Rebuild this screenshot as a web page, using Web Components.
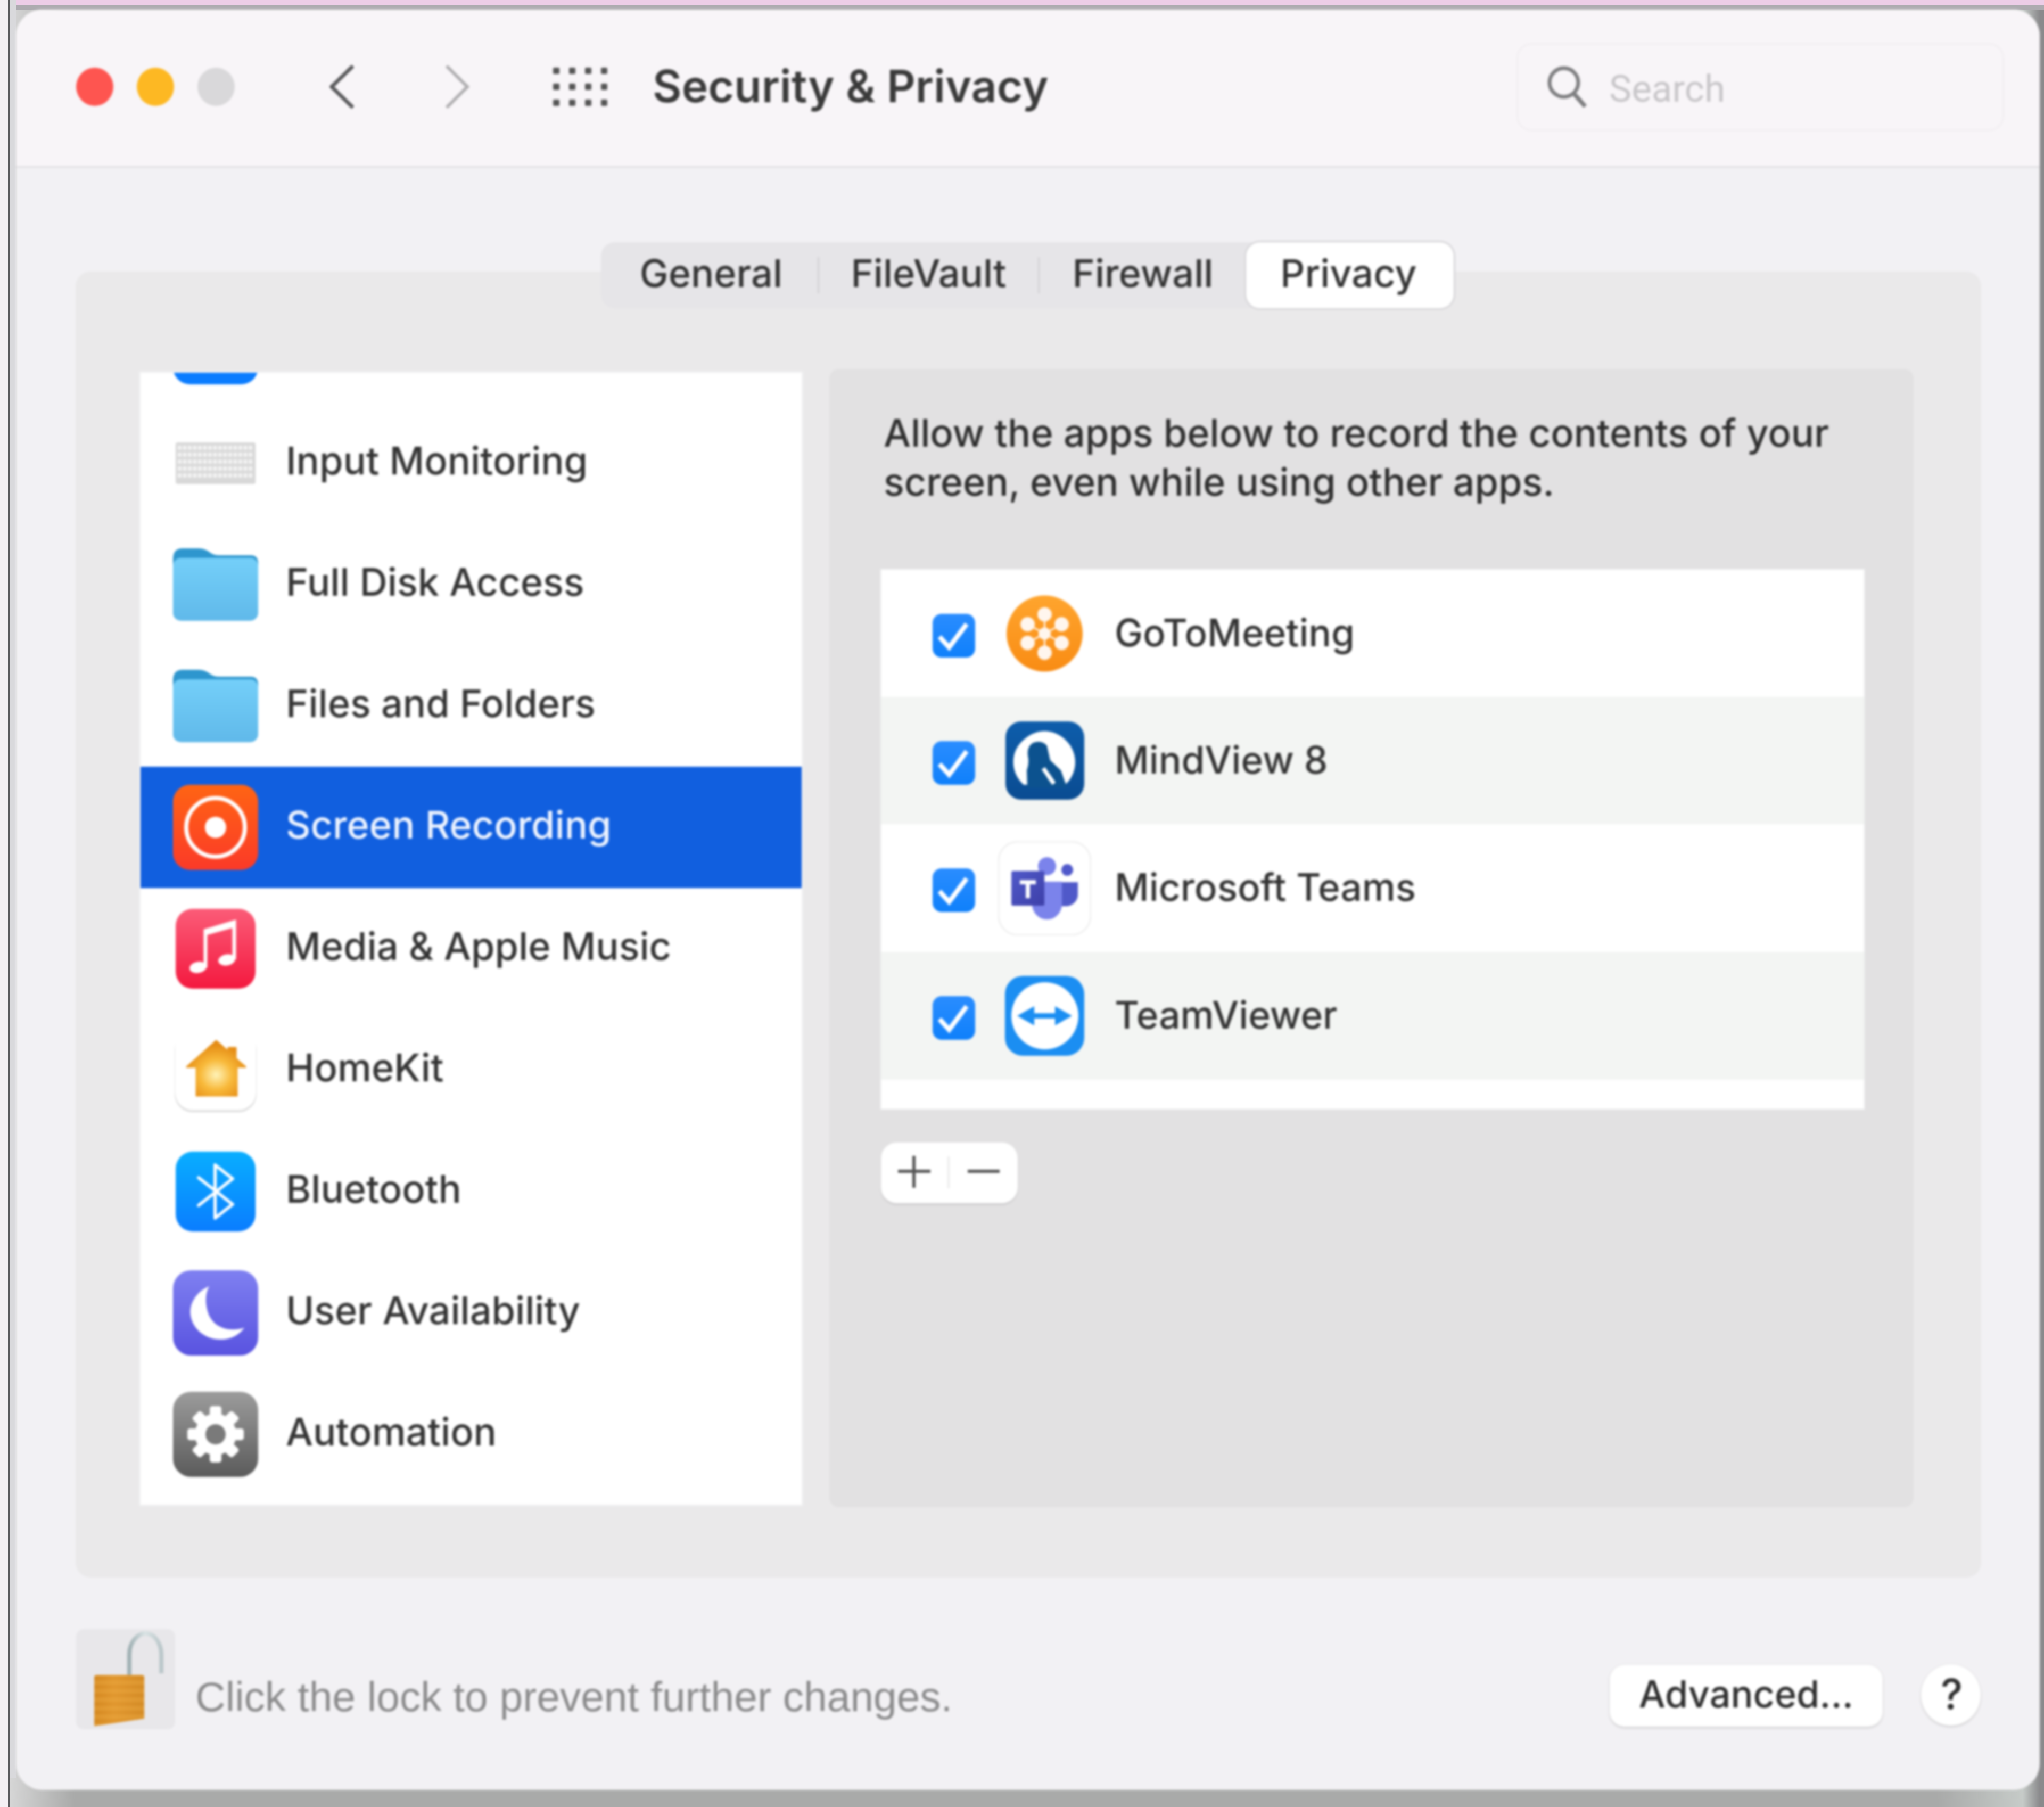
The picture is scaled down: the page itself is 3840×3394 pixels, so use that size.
<!doctype html>
<html>
<head>
<meta charset="utf-8">
<title>Security &amp; Privacy</title>
<style>
  html, body { margin: 0; padding: 0; }
  body { width: 3840px; height: 3394px; overflow: hidden; font-family: Inter, "Liberation Sans", sans-serif; color: #333; }
</style>
</head>
<body>
<desktop-frame>
  <mac-window>
    <mac-toolbar slot="toolbar">Security &amp; Privacy</mac-toolbar>
    <prefs-panel>
      <tab-strip slot="tabs">
        <tab-item style="width:407px;padding-left:8px">General</tab-item>
        <tab-item sep style="width:414px;padding-left:4px">FileVault</tab-item>
        <tab-item sep style="width:391px;padding-left:4px">Firewall</tab-item>
        <tab-item active style="width:390px;padding-right:4px">Privacy</tab-item>
      </tab-strip>
      <side-list slot="side">
        <side-row icon="blank"></side-row>
        <side-row icon="keyboard">Input Monitoring</side-row>
        <side-row icon="folder">Full Disk Access</side-row>
        <side-row icon="folder">Files and Folders</side-row>
        <side-row icon="record" selected>Screen Recording</side-row>
        <side-row icon="music">Media &amp; Apple Music</side-row>
        <side-row icon="home">HomeKit</side-row>
        <side-row icon="bluetooth">Bluetooth</side-row>
        <side-row icon="moon">User Availability</side-row>
        <side-row icon="gear">Automation</side-row>
      </side-list>
      <detail-pane slot="detail">
        <span slot="text">Allow the apps below to record the contents of your<br>screen, even while using other apps.</span>
        <app-row icon="goto" style="height:239px">GoToMeeting</app-row>
        <app-row icon="mindview" alt style="height:239px">MindView 8</app-row>
        <app-row icon="teams" style="height:240px">Microsoft Teams</app-row>
        <app-row icon="teamviewer" alt style="height:240px">TeamViewer</app-row>
      </detail-pane>
    </prefs-panel>
    <lock-footer slot="footer"></lock-footer>
  </mac-window>
</desktop-frame>

<script>
const icons = {
  blank: `<svg width="160" height="160" viewBox="0 0 160 160"><rect width="160" height="160" rx="32" fill="#0a7cff"/></svg>`,
  keyboard: `<svg width="160" height="160" viewBox="0 0 160 160"><rect x="5" y="41" width="150" height="78" rx="4" fill="#d8d8d8"/>
    <g stroke="#f3f3f3" stroke-width="8" stroke-dasharray="7 2.500"><path d="M9 51H151M9 64H151M9 77H151M9 90H151M9 103H151"/></g></svg>`,
  folder: `<svg width="160" height="160" viewBox="0 0 160 160"><defs><linearGradient id="f" x1="0" y1="0" x2="0" y2="1"><stop offset="0" stop-color="#74cff9"/><stop offset="1" stop-color="#60b9ea"/></linearGradient></defs>
    <path d="M0 32Q0 12 18 12H48Q60 12 70 20Q76 25 88 25H146Q160 25 160 40V70H0Z" fill="#2e96ce"/>
    <rect x="0" y="30" width="160" height="118" rx="15" fill="url(#f)"/></svg>`,
  record: `<svg width="160" height="160" viewBox="0 0 160 160"><defs><linearGradient id="r" x1="0" y1="0" x2="0" y2="1"><stop offset="0" stop-color="#ff6414"/><stop offset="1" stop-color="#fb3a28"/></linearGradient></defs>
    <rect width="160" height="160" rx="32" fill="url(#r)"/><circle cx="80" cy="80" r="55" fill="none" stroke="#fff" stroke-width="8"/><circle cx="80" cy="80" r="20" fill="#fff"/></svg>`,
  music: `<svg width="160" height="160" viewBox="0 0 160 160"><defs><linearGradient id="m" x1="0" y1="0" x2="0" y2="1"><stop offset="0" stop-color="#fb5c78"/><stop offset="1" stop-color="#f4193f"/></linearGradient></defs>
    <rect x="5" y="5" width="150" height="150" rx="32" fill="url(#m)"/>
    <path d="M61 116V46L115 30V100" fill="none" stroke="#fff" stroke-width="7"/><path d="M61 44L115 29V40L61 55Z" fill="#fff"/>
    <ellipse cx="47" cy="115" rx="16" ry="10.500" fill="#fff" transform="rotate(-10 47 115)"/><ellipse cx="101" cy="101" rx="16" ry="10.500" fill="#fff" transform="rotate(-10 101 101)"/></svg>`,
  home: `<svg width="160" height="160" viewBox="0 0 160 160"><defs><radialGradient id="h" cx="0.500" cy="0.620" r="0.550"><stop offset="0" stop-color="#fff3b8"/><stop offset="0.500" stop-color="#f8b93a"/><stop offset="1" stop-color="#e58c14"/></radialGradient></defs>
    <rect x="3" y="7" width="154" height="152" rx="34" fill="#dedede"/>
    <rect x="4" y="3" width="152" height="152" rx="33" fill="#fff"/>
    <path d="M26 74L81 25L104 45V38H118V58L136 74H120V128H44V74Z" fill="url(#h)" stroke="url(#h)" stroke-width="3" stroke-linejoin="round"/></svg>`,
  bluetooth: `<svg width="160" height="160" viewBox="0 0 160 160"><defs><linearGradient id="b" x1="0" y1="0" x2="0" y2="1"><stop offset="0" stop-color="#09aeff"/><stop offset="1" stop-color="#0a7dff"/></linearGradient></defs>
    <rect x="5" y="5" width="150" height="150" rx="32" fill="url(#b)"/>
    <path d="M48 54L112 104L79 130V30L112 56L48 106" fill="none" stroke="#fff" stroke-width="6" stroke-linejoin="round" stroke-linecap="round"/></svg>`,
  moon: `<svg width="160" height="160" viewBox="0 0 160 160"><defs><linearGradient id="n" x1="0" y1="0" x2="0" y2="1"><stop offset="0" stop-color="#7f80f1"/><stop offset="1" stop-color="#5953e0"/></linearGradient></defs>
    <rect width="160" height="160" rx="34" fill="url(#n)"/>
    <path d="M68 30C44 40 30 62 33 84C37 112 62 130 90 130C108 130 124 122 134 108C100 118 74 104 66 80C60 62 60 44 68 30Z" fill="#fff"/></svg>`,
  gear: `<svg width="160" height="160" viewBox="0 0 160 160"><defs><linearGradient id="g" x1="0" y1="0" x2="0" y2="1"><stop offset="0" stop-color="#9c9c9c"/><stop offset="1" stop-color="#5b5b5b"/></linearGradient></defs>
    <rect width="160" height="160" rx="34" fill="url(#g)"/>
    <g fill="#fff"><circle cx="80" cy="80" r="39"/>
      <rect x="69" y="27" width="22" height="106" rx="5"/>
      <rect x="69" y="27" width="22" height="106" rx="5" transform="rotate(45 80 80)"/>
      <rect x="69" y="27" width="22" height="106" rx="5" transform="rotate(90 80 80)"/>
      <rect x="69" y="27" width="22" height="106" rx="5" transform="rotate(135 80 80)"/></g>
    <circle cx="80" cy="80" r="19" fill="#7a7a7a"/></svg>`,
  goto: `<svg width="143" height="144" viewBox="0 0 143 144"><defs><linearGradient id="o" x1="0" y1="0" x2="0" y2="1"><stop offset="0" stop-color="#ffa52e"/><stop offset="1" stop-color="#f98c14"/></linearGradient></defs>
    <circle cx="71.500" cy="72" r="71.500" fill="url(#o)"/>
    <g fill="#fff6ee" stroke="#fff6ee" stroke-width="3"><path d="M71.500 36V108M39.500 54.500L103.500 89.500M39.500 89.500L103.500 54.500"/>
      <circle cx="71.500" cy="36" r="12"/><circle cx="71.500" cy="108" r="12"/><circle cx="39.500" cy="54.500" r="12"/><circle cx="103.500" cy="54.500" r="12"/><circle cx="39.500" cy="89.500" r="12"/><circle cx="103.500" cy="89.500" r="12"/><circle cx="71.500" cy="72" r="10"/></g></svg>`,
  mindview: `<svg width="148" height="147" viewBox="0 0 148 147"><defs><linearGradient id="v" x1="0" y1="0" x2="0" y2="1"><stop offset="0" stop-color="#0e5dab"/><stop offset="1" stop-color="#0a4c92"/></linearGradient></defs>
    <rect width="148" height="147" rx="30" fill="url(#v)"/>
    <path d="M34 119C8 95 8 55 36 33C60 12 92 14 114 36C138 60 136 98 112 119Z" fill="#fff"/>
    <path d="M41 125L40 92Q44 80 43 70Q38 48 52 40Q68 34 78 46L84 73L104 92L116 125Z" fill="#0c528f"/>
    <path d="M71 88L91 117" stroke="#fff" stroke-width="8" fill="none"/></svg>`,
  teams: `<svg width="175" height="177" viewBox="0 0 175 177"><defs><linearGradient id="w" x1="0" y1="0" x2="1" y2="1"><stop offset="0" stop-color="#5059c9"/><stop offset="1" stop-color="#3d3fa8"/></linearGradient></defs>
    <rect x="1" y="1" width="173" height="175" rx="36" fill="#fff" stroke="#efefef" stroke-width="3"/>
    <circle cx="130" cy="54" r="11" fill="#4f58ca"/>
    <path d="M108 77H150V100C150 112 140 122 128 122H108Z" fill="#5059c9"/>
    <path d="M64 76H120V118C120 134 108 147 92 147C76 147 64 134 64 118Z" fill="#7b83eb"/>
    <circle cx="92" cy="47" r="17" fill="#7b83eb"/>
    <rect x="25" y="56" width="62" height="65" rx="3" fill="url(#w)"/>
    <path d="M41 73H71V81H60V107H52V81H41Z" fill="#fff"/></svg>`,
  teamviewer: `<svg width="149" height="150" viewBox="0 0 149 150"><rect width="149" height="150" rx="34" fill="#1b8ef2"/><circle cx="75" cy="75" r="63" fill="#fff"/>
    <path d="M23 75L55 57V70H94V57L126 75L94 93V80H55V93Z" fill="#1b8ef2"/></svg>`
}

class DesktopFrame extends HTMLElement {
  constructor () {
    super()
    this.attachShadow({ mode: 'open' }).innerHTML = `
      <style>
        :host {
          display: block;
          box-sizing: border-box;
          width: 3840px;
          height: 3394px;
          padding: 18px 8px 32px 30px;
          background:
            linear-gradient(90deg, #f4f0f4 0 15px, #5a5a5e 15px 18px, #d9d9dc 18px 30px, transparent 30px) 0 0 / 100% 3340px no-repeat,
            linear-gradient(#eccde7 0 10px, #adabb0 10px 18px, transparent 18px),
            linear-gradient(90deg, #f4f0f4 0 15px, #5a5a5e 15px 18px, #d6d6d6 18px, #a9aaa9 140px, #a9aaa9 3640px, #c6cbc8 3800px, #8a8a8c 3832px);
        }
      </style>
      <slot></slot>`
  }
}

class MacWindow extends HTMLElement {
  constructor () {
    super()
    this.attachShadow({ mode: 'open' }).innerHTML = `
      <style>
        :host {
          display: flex;
          flex-direction: column;
          height: 100%;
          border-radius: 50px;
          overflow: hidden;
          background: #f2f1f4;
          filter: blur(2px);
        }
      </style>
      <slot name="toolbar"></slot>
      <slot></slot>
      <slot name="footer"></slot>`
  }
}

class MacToolbar extends HTMLElement {
  constructor () {
    super()
    let dots = ''
    for (let r = 0; r < 3; r++) {
      for (let c = 0; c < 4; c++) dots += `<rect x="${c * 30}" y="${r * 30}" width="12" height="12" rx="2" fill="#555"/>`
    }
    this.attachShadow({ mode: 'open' }).innerHTML = `
      <style>
        :host {
          display: flex;
          align-items: center;
          box-sizing: border-box;
          height: 297px;
          padding: 0 67px 4px 113px;
          background: #f8f5f8;
          border-bottom: 3px solid #e0dfe2;
        }
        .light { width: 70px; height: 72px; border-radius: 50%; margin-right: 44px; }
        .title { font-size: 84px; font-weight: 600; color: #3a3a3a; margin-left: 85px; padding-bottom: 3px; white-space: nowrap; }
        .search {
          display: flex; align-items: center; box-sizing: border-box;
          width: 916px; height: 165px; margin-left: auto; padding-left: 55px;
          border: 3px solid #f1eef1; border-radius: 28px;
          font: 71px Roboto, sans-serif; color: #c8c6c9;
        }
        .search span { margin-left: 42px; padding-top: 7px; }
        svg { display: block; flex: none; }
      </style>
      <div class="light" style="background:#fe5550"></div>
      <div class="light" style="background:#fdb823"></div>
      <div class="light" style="background:#d9d8da;margin-right:0"></div>
      <svg style="margin-left:178px" width="47" height="84" viewBox="0 0 47 84"><path d="M44 3L4 42L44 81" fill="none" stroke="#58585a" stroke-width="7"/></svg>
      <svg style="margin-left:169px" width="47" height="84" viewBox="0 0 47 84"><path d="M4 3L43 42L4 81" fill="none" stroke="#aeadaf" stroke-width="6"/></svg>
      <svg style="margin-left:157px" width="102" height="72" viewBox="0 0 102 72">${dots}</svg>
      <div class="title"><slot></slot></div>
      <div class="search">
        <svg width="74" height="78" viewBox="0 0 74 78"><circle cx="31" cy="31" r="27" fill="none" stroke="#7e7e80" stroke-width="7"/><path d="M50 52L71 76" stroke="#7e7e80" stroke-width="8"/></svg>
        <span>Search</span>
      </div>`
  }
}

class PrefsPanel extends HTMLElement {
  constructor () {
    super()
    this.attachShadow({ mode: 'open' }).innerHTML = `
      <style>
        :host {
          display: block;
          box-sizing: border-box;
          height: 2453px;
          margin: 195px 110px 0 112px;
          padding: 0 127px 0 122px;
          background: #eae9ea;
          border-radius: 28px;
        }
        .tabs { display: flex; justify-content: center; margin-top: -55px; height: 245px; }
        .cols { display: flex; gap: 52px; align-items: flex-start; }
      </style>
      <div class="tabs"><slot name="tabs"></slot></div>
      <div class="cols"><slot name="side"></slot><slot name="detail"></slot></div>`
  }
}

class TabStrip extends HTMLElement {
  constructor () {
    super()
    this.attachShadow({ mode: 'open' }).innerHTML = `
      <style>
        :host {
          display: flex;
          box-sizing: border-box;
          height: 124px;
          background: #e6e5e8;
          border-radius: 26px;
          font-size: 72px;
          font-weight: 500;
        }
      </style>
      <slot></slot>`
  }
}

class TabItem extends HTMLElement {
  constructor () {
    super()
    this.attachShadow({ mode: 'open' }).innerHTML = `
      <style>
        :host { display: flex; align-items: center; justify-content: center; position: relative; height: 100%; color: #333; box-sizing: border-box; padding-bottom: 9px; }
        :host([active]) { background: #fff; border-radius: 26px; box-shadow: 0 0 0 3px #d6d5d8; }
        :host([sep])::before { content: ""; position: absolute; left: 0; top: 28px; bottom: 28px; width: 3px; background: #d2d1d4; }
      </style>
      <slot></slot>`
  }
}

class SideList extends HTMLElement {
  constructor () {
    super()
    this.attachShadow({ mode: 'open' }).innerHTML = `
      <style>
        :host {
          display: block;
          flex: none;
          width: 1242px;
          height: 2126px;
          overflow: hidden;
          background: #fff;
          box-shadow: 0 0 0 3px #f0f0f1;
        }
        .scroll { margin-top: -172px; }
      </style>
      <div class="scroll"><slot></slot></div>`
  }
}

class SideRow extends HTMLElement {
  constructor () {
    super()
    const name = this.getAttribute('icon')
    this.attachShadow({ mode: 'open' }).innerHTML = `
      <style>
        :host {
          display: flex;
          align-items: center;
          height: 228px;
          padding-left: 61px;
          font-size: 72px;
          font-weight: 500;
          color: #333;
        }
        :host([selected]) { background: #115fdf; color: #eef4ff; }
        .label { margin-left: 52px; padding-bottom: 12px; white-space: nowrap; }
        svg { display: block; }
      </style>
      ${icons[name]}
      <div class="label"><slot></slot></div>`
  }
}

class DetailPane extends HTMLElement {
  constructor () {
    super()
    this.attachShadow({ mode: 'open' }).innerHTML = `
      <style>
        :host {
          display: block;
          box-sizing: border-box;
          width: 2037px;
          height: 2138px;
          margin-top: -7px;
          padding: 74px 93px 0 97px;
          background: #e2e1e2;
          border-radius: 18px;
          font-size: 72px;
          font-weight: 500;
          color: #2e2e2e;
        }
        .text { margin-left: 5px; line-height: 92px; height: 303px; white-space: nowrap; }
        .list { background: #fff; padding-bottom: 55px; box-shadow: 0 0 0 2px #e9e9ea; }
        .pm {
          display: flex; align-items: center; width: 257px; height: 114px; margin-top: 63px;
          background: #fff; border-radius: 30px; box-shadow: 0 3px 3px #c9c8ca;
        }
        svg { display: block; }
      </style>
      <div class="text"><slot name="text"></slot></div>
      <div class="list"><slot></slot></div>
      <div class="pm">
        <svg width="257" height="114" viewBox="0 0 257 114"><path d="M32 54H93M62 25V85M163 54H223" stroke="#555" stroke-width="6" fill="none"/><path d="M127 26V86" stroke="#ececec" stroke-width="4"/></svg>
      </div>`
  }
}

class AppRow extends HTMLElement {
  constructor () {
    super()
    const name = this.getAttribute('icon')
    this.attachShadow({ mode: 'open' }).innerHTML = `
      <style>
        :host { display: flex; align-items: center; padding-left: 97px; background: #fff; }
        :host([alt]) { background: #f3f5f3; }
        .check { margin-top: 8px; }
        .slot { display: flex; justify-content: center; width: 175px; margin-left: 43px; }
        .label { margin-left: 44px; white-space: nowrap; padding-bottom: 4px; font-size: 71px; color: #333; }
        svg { display: block; }
      </style>
      <svg class="check" width="80" height="82" viewBox="0 0 80 82"><defs><linearGradient id="c" x1="0" y1="0" x2="0" y2="1"><stop offset="0" stop-color="#2a8dff"/><stop offset="1" stop-color="#0f80fb"/></linearGradient></defs><rect width="80" height="82" rx="17" fill="url(#c)"/><path d="M13 43L31 63L64 19" fill="none" stroke="#fff" stroke-width="9"/></svg>
      <div class="slot">${icons[name]}</div>
      <div class="label"><slot></slot></div>`
  }
}

class LockFooter extends HTMLElement {
  constructor () {
    super()
    this.attachShadow({ mode: 'open' }).innerHTML = `
      <style>
        :host {
          display: flex;
          align-items: center;
          margin-top: 97px;
          padding: 0 111px 0 113px;
        }
        .lock { display: block; flex: none; }
        .msg { margin-left: 38px; margin-top: 67px; font: 78.500px "Liberation Sans", Arial, sans-serif; color: #8b8b8c; white-space: nowrap; }
        .adv {
          display: flex; align-items: center; justify-content: center; box-sizing: border-box;
          width: 513px; height: 116px; margin-left: auto; margin-top: 62px; padding-bottom: 8px;
          background: #fff; border-radius: 28px; box-shadow: 0 3px 4px #d2d1d3, 0 0 0 2px #ebeaec;
          font-size: 70px; font-weight: 500; color: #2e2e2e;
        }
        .help {
          display: flex; align-items: center; justify-content: center; box-sizing: border-box;
          width: 112px; height: 115px; margin-left: 72px; margin-top: 58px; padding: 0 0 4px 3px;
          background: #fff; border-radius: 50%; box-shadow: 0 3px 4px #d2d1d3, 0 0 0 2px #ebeaec;
          font-size: 78px; font-weight: 500; color: #2e2e2e;
        }
      </style>
      <svg class="lock" width="186" height="188" viewBox="0 0 186 188">
        <defs>
          <linearGradient id="s" x1="0" y1="0" x2="1" y2="0"><stop offset="0" stop-color="#9fb0b3"/><stop offset="0.500" stop-color="#d9e3e4"/><stop offset="1" stop-color="#b9c6c9"/></linearGradient>
          <linearGradient id="l" x1="0" y1="0" x2="1" y2="0"><stop offset="0" stop-color="#d98c22"/><stop offset="0.400" stop-color="#eca236"/><stop offset="1" stop-color="#d99029"/></linearGradient>
          <pattern id="st" width="96" height="16" patternUnits="userSpaceOnUse"><rect width="96" height="16" fill="#c97f1d" opacity="0.300"/><rect width="96" height="9" fill="#f4b04a" opacity="0.300"/></pattern>
        </defs>
        <rect width="186" height="188" rx="14" fill="#e8e7ea"/>
        <path d="M100 90V48C100 22 118 8 130 8C148 8 160 28 160 48V83" fill="none" stroke="url(#s)" stroke-width="8"/>
        <path d="M34 90Q34 86 40 86H122Q128 86 128 90V168L34 182Z" fill="url(#l)"/>
        <path d="M34 90Q34 86 40 86H122Q128 86 128 90V168L34 182Z" fill="url(#st)"/>
      </svg>
      <div class="msg">Click the lock to prevent further changes.</div>
      <div class="adv">Advanced...</div>
      <div class="help">?</div>`
  }
}

customElements.define('desktop-frame', DesktopFrame)
customElements.define('mac-window', MacWindow)
customElements.define('mac-toolbar', MacToolbar)
customElements.define('prefs-panel', PrefsPanel)
customElements.define('tab-strip', TabStrip)
customElements.define('tab-item', TabItem)
customElements.define('side-list', SideList)
customElements.define('side-row', SideRow)
customElements.define('detail-pane', DetailPane)
customElements.define('app-row', AppRow)
customElements.define('lock-footer', LockFooter)
</script>
</body>
</html>
